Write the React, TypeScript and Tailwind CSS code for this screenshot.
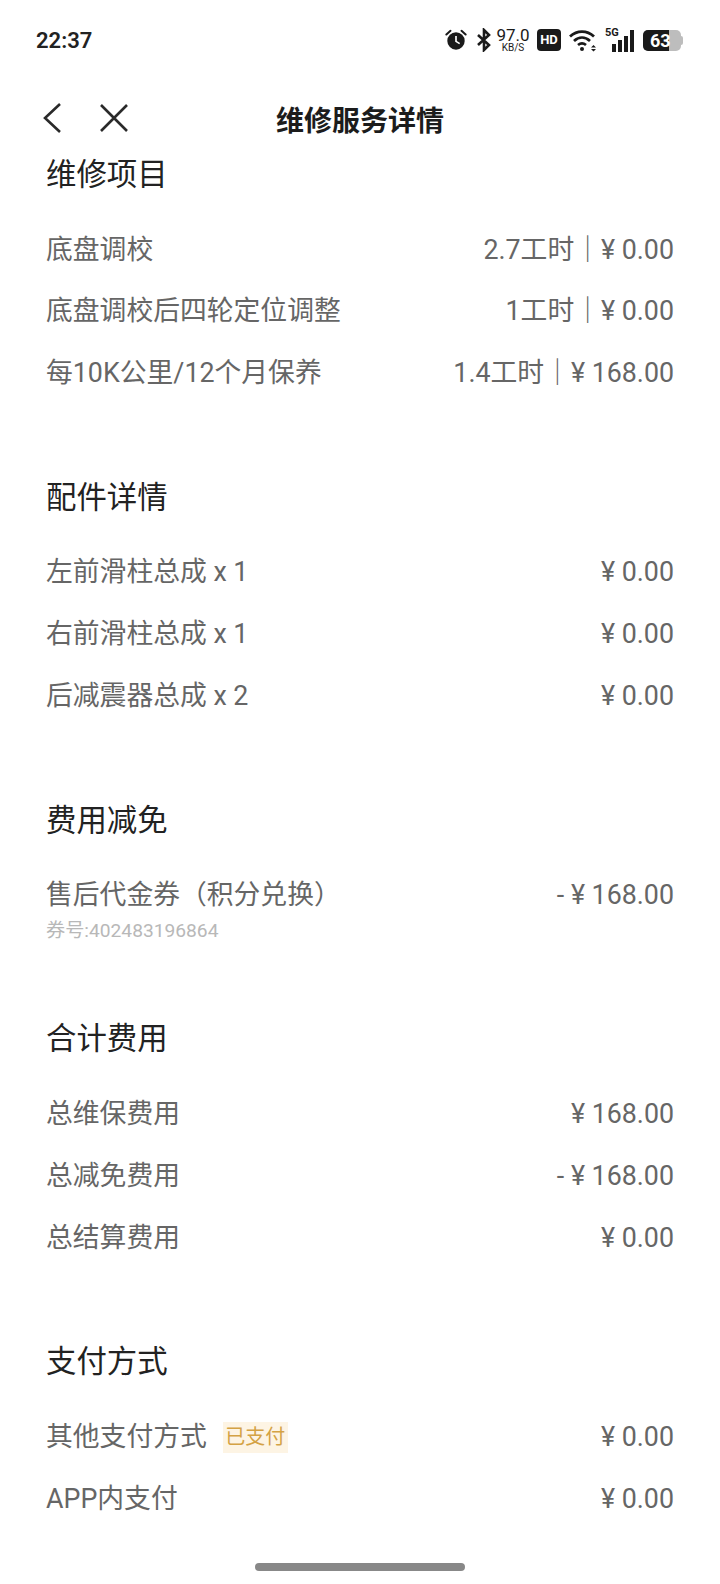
type RowProps = { label: string; value: string; badge?: string; sub?: string };

function Row({ label, value, badge, sub }: RowProps) {
  return (
    <div>
      <div className="flex h-[61.8px] items-center justify-between text-[26.8px] leading-none text-[#666666]">
        <div className="flex items-center">
          <span>{label}</span>
          {badge && (
            <span className="ml-4 flex h-[31px] w-[65px] items-center justify-center bg-[#fdf4e4] text-[20px] text-[#d4a244]">
              {badge}
            </span>
          )}
        </div>
        <span>{value}</span>
      </div>
      {sub && <div className="mt-[-8px] text-[19.2px] leading-[24px] text-[#b8b8b8]">{sub}</div>}
    </div>
  );
}

function Section({ title, className, children }: { title: string; className: string; children: React.ReactNode }) {
  return (
    <section className={className}>
      <h2 className="h-[44px] text-[30.4px] leading-[44px] text-[#222222]">{title}</h2>
      <div className="mt-[22px]">{children}</div>
    </section>
  );
}

function StatusIcons() {
  return (
    <div className="flex items-center text-[#1a1a1a]">
      <svg width="22" height="24" viewBox="0 0 24 24" fill="currentColor">
        <circle cx="12" cy="13" r="9.500" />
        <path d="M1.500 6 6 2M22.500 6 18 2" stroke="currentColor" strokeWidth="2.2" strokeLinecap="round" />
        <path d="M12 7.500V13.500L16 16" stroke="#fff" strokeWidth="1.8" fill="none" />
      </svg>
      <svg className="ml-[10px]" width="14" height="24" viewBox="0 0 14 24" fill="none" stroke="currentColor" strokeWidth="2.6">
        <path d="M1 7 12 17 7 22V2l5 5L1 17" />
      </svg>
      <div className="ml-[6px] flex w-[32px] flex-col items-center text-center">
        <span className="text-[17px] leading-[15px]">97.0</span>
        <span className="text-[10px] leading-[10px]">KB/S</span>
      </div>
      <div className="ml-[8px] flex h-[22px] w-[24px] items-center justify-center rounded-[4px] bg-[#1a1a1a] text-[13px] font-bold text-white">
        HD
      </div>
      <svg className="ml-[8px]" width="28" height="24" viewBox="0 0 28 24" fill="none" stroke="currentColor" strokeWidth="2.8">
        <path d="M1 8.500C8 2 18 2 25 8.500M5 13C10 8.500 16 8.500 21 13M9 17C11.500 15 14.500 15 17 17" />
        <circle cx="13" cy="21" r="2" fill="currentColor" stroke="none" />
        <path d="M22 19.500h5L24.500 17ZM22 21h5L24.500 23.500Z" fill="currentColor" stroke="none" />
      </svg>
      <div className="relative ml-[8px] h-[24px] w-[29px]">
        <span className="absolute left-0 top-[-1px] text-[11px] font-bold leading-[12px]">5G</span>
        <div className="absolute inset-0 flex items-end justify-end gap-[2px]">
          <div className="h-[8px] w-[4px] bg-[#1a1a1a]" />
          <div className="h-[12px] w-[4px] bg-[#1a1a1a]" />
          <div className="h-[16px] w-[4px] bg-[#1a1a1a]" />
          <div className="h-[22px] w-[4px] bg-[#1a1a1a]" />
        </div>
      </div>
      <div className="relative ml-[9px] flex h-[21px] w-[38px] overflow-hidden rounded-[5px] bg-[#bdbdbd]">
        <div className="h-full w-[26px] bg-[#1a1a1a]" />
        <span className="absolute left-[7px] top-0 text-[18px] font-bold leading-[21px] text-white">63</span>
      </div>
      <div className="h-[9px] w-[2px] rounded-r-full bg-[#bdbdbd]" />
    </div>
  );
}

export default function App() {
  return (
    <div
      className="relative h-[1584px] w-[720px] overflow-hidden bg-white"
      style={{ fontFamily: 'Roboto, "Noto Sans CJK SC", sans-serif' }}
    >
      <div className="flex h-[80px] items-center justify-between pl-[36px] pr-[37px]">
        <span className="text-[22px] font-semibold text-[#222222]">22:37</span>
        <StatusIcons />
      </div>

      <div className="relative flex h-[76px] items-center pl-[41px]">
        <svg width="22" height="32" viewBox="0 0 22 32" fill="none" stroke="#2a2a2a" strokeWidth="2.6">
          <path d="M19 2 4 16l15 14" />
        </svg>
        <svg className="ml-[36px]" width="30" height="30" viewBox="0 0 30 30" fill="none" stroke="#2a2a2a" strokeWidth="2.6">
          <path d="M2 2 28 28M28 2 2 28" />
        </svg>
        <h1 className="absolute inset-x-0 top-[21px] text-center text-[28px] font-bold text-[#1c1c1c]">维修服务详情</h1>
      </div>

      <main className="px-[46px]">
        <Section title="维修项目" className="mt-[-3px]">
          <Row label="底盘调校" value="2.7工时｜¥ 0.00" />
          <Row label="底盘调校后四轮定位调整" value="1工时｜¥ 0.00" />
          <Row label="每10K公里/12个月保养" value="1.4工时｜¥ 168.00" />
        </Section>
        <Section title="配件详情" className="mt-[71.5px]">
          <Row label="左前滑柱总成 x 1" value="¥ 0.00" />
          <Row label="右前滑柱总成 x 1" value="¥ 0.00" />
          <Row label="后减震器总成 x 2" value="¥ 0.00" />
        </Section>
        <Section title="费用减免" className="mt-[71.7px]">
          <Row label="售后代金券（积分兑换）" value="- ¥ 168.00" sub="券号:402483196864" />
        </Section>
        <Section title="合计费用" className="mt-[74.7px]">
          <Row label="总维保费用" value="¥ 168.00" />
          <Row label="总减免费用" value="- ¥ 168.00" />
          <Row label="总结算费用" value="¥ 0.00" />
        </Section>
        <Section title="支付方式" className="mt-[71.5px]">
          <Row label="其他支付方式" value="¥ 0.00" badge="已支付" />
          <Row label="APP内支付" value="¥ 0.00" />
        </Section>
      </main>

      <div className="absolute bottom-[13px] left-[255px] h-[8px] w-[210px] rounded-full bg-[#888888]" />
    </div>
  );
}
